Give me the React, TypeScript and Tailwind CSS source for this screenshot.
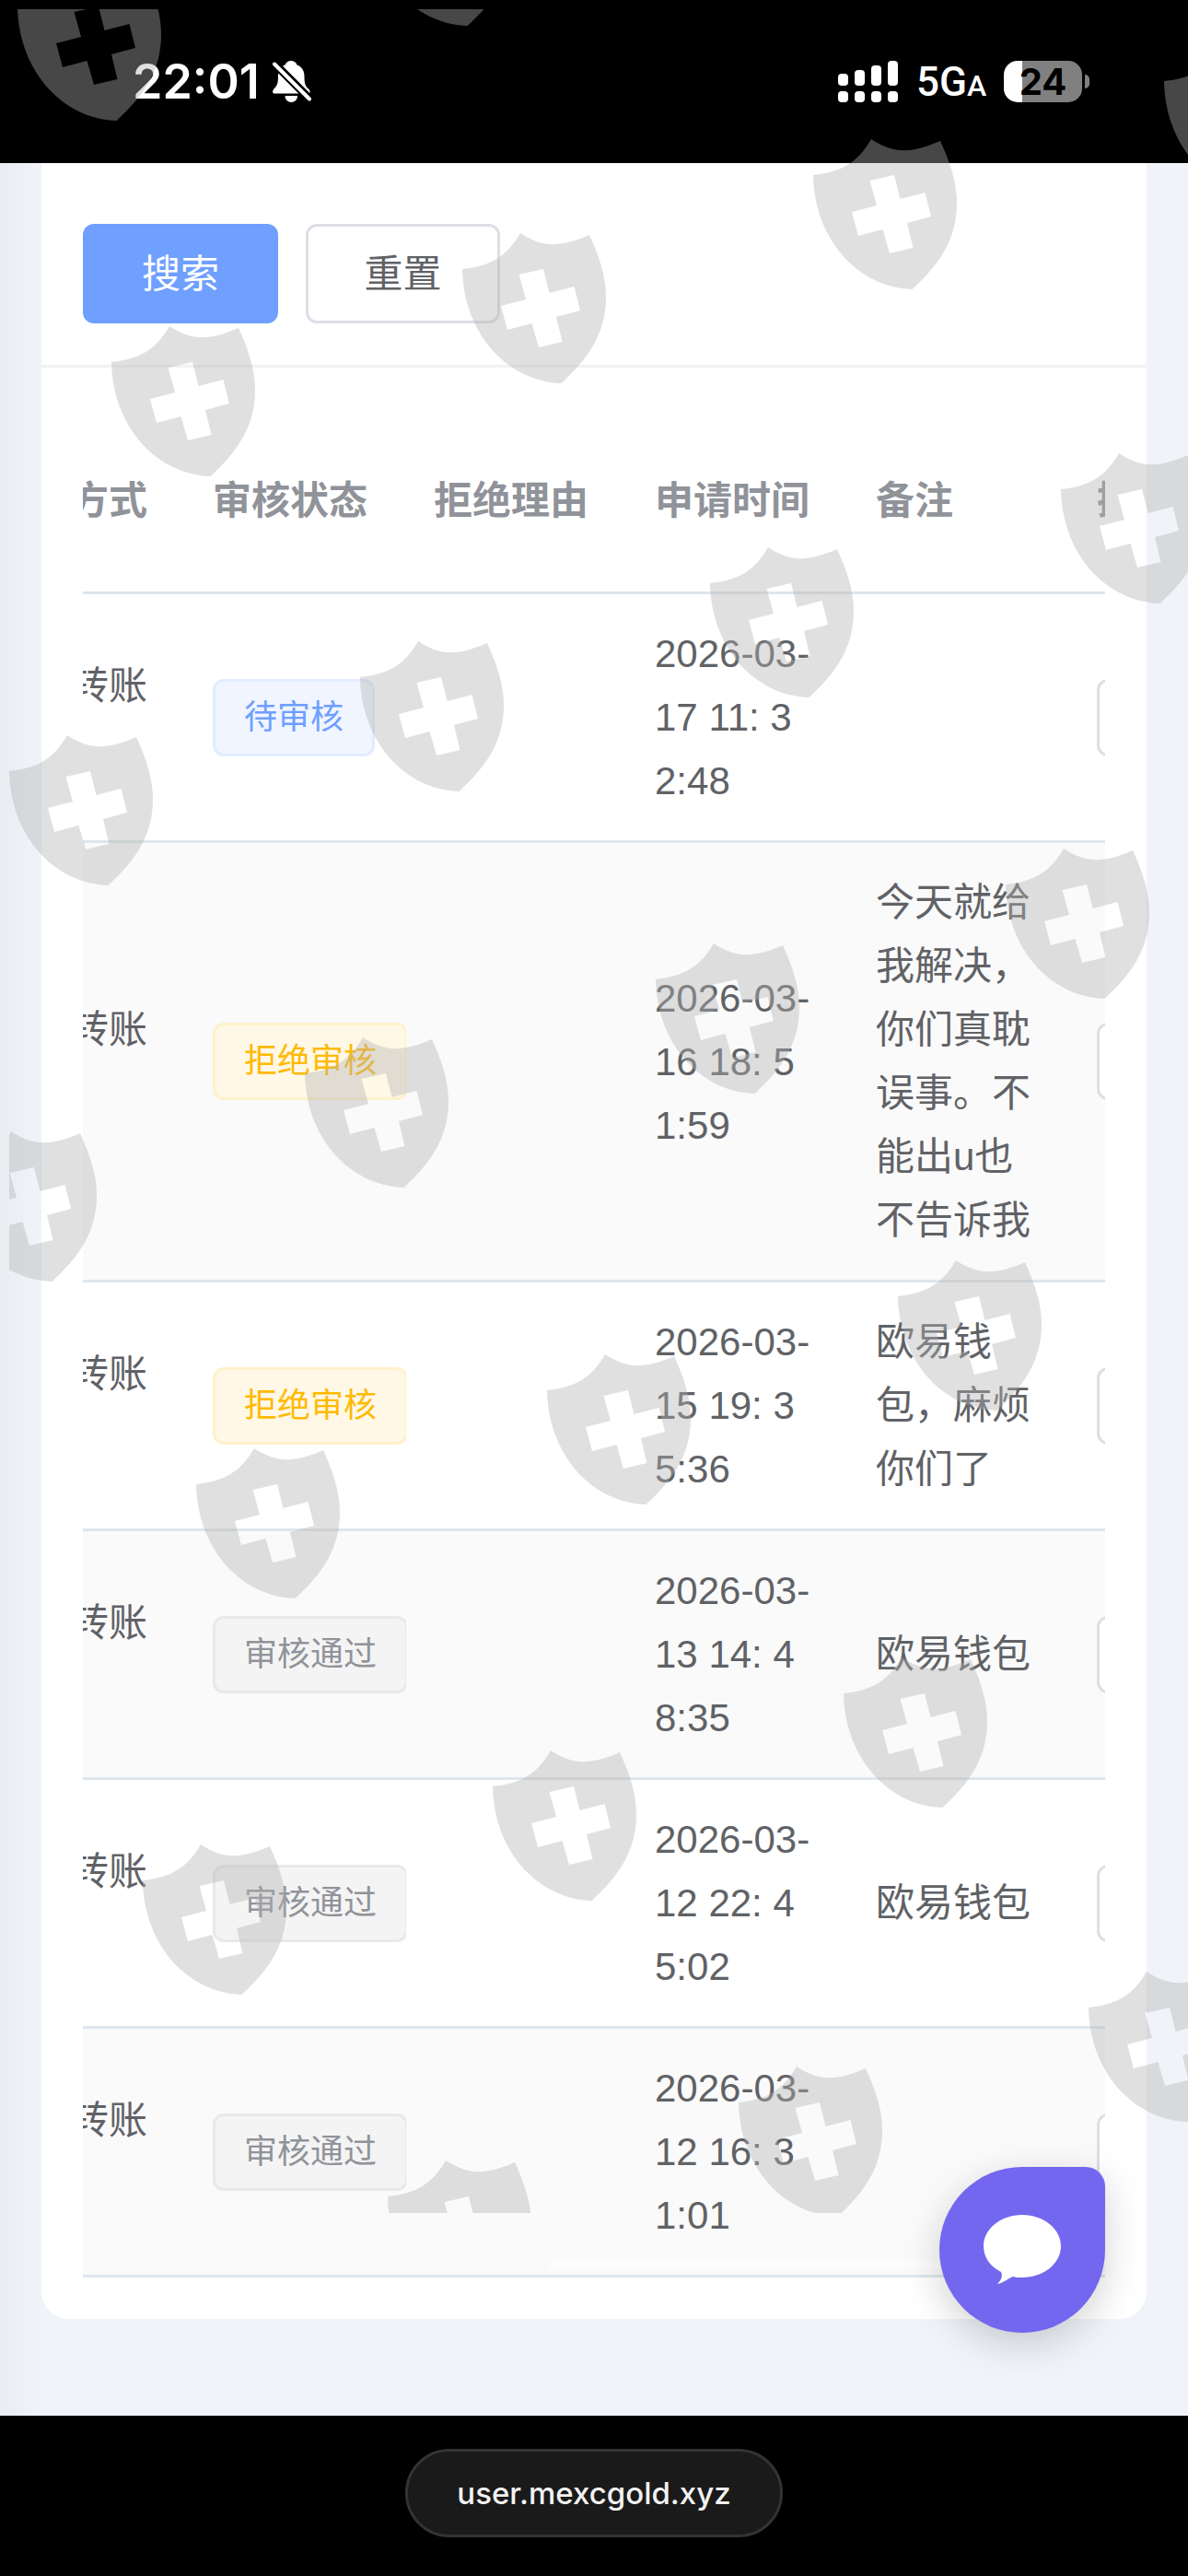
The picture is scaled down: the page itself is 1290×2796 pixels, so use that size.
type Status = "pending" | "rejected" | "passed";

interface RecordRow {
  status: Status;
  time: string[];
  remark: string[];
}

const columns = ["审核状态", "拒绝理由", "申请时间", "备注"];

const rows: RecordRow[] = [
  { status: "pending", time: ["2026-03-", "17 11: 3", "2:48"], remark: [] },
  {
    status: "rejected",
    time: ["2026-03-", "16 18: 5", "1:59"],
    remark: ["今天就给", "我解决，", "你们真耽", "误事。不", "能出u也", "不告诉我"],
  },
  { status: "rejected", time: ["2026-03-", "15 19: 3", "5:36"], remark: ["欧易钱", "包，麻烦", "你们了"] },
  { status: "passed", time: ["2026-03-", "13 14: 4", "8:35"], remark: ["欧易钱包"] },
  { status: "passed", time: ["2026-03-", "12 22: 4", "5:02"], remark: ["欧易钱包"] },
  { status: "passed", time: ["2026-03-", "12 16: 3", "1:01"], remark: [] },
];

const statusStyle: Record<Status, { label: string; className: string }> = {
  pending: { label: "待审核", className: "border-[#e2ecff] bg-[#f0f5ff] text-[#6f9fff]" },
  rejected: { label: "拒绝审核", className: "border-[#fff1cc] bg-[#fff8e6] text-[#ffba00]" },
  passed: { label: "审核通过", className: "border-[#e9e9e9] bg-[#f4f4f4] text-[#909399]" },
};

// Offsets of each shield inside the watermark layer.
const shields: [number, number][] = [
  [9, -42],
  [390, -145],
  [1254, 39],
  [873, 141],
  [492, 243],
  [111, 344],
  [1142, 482],
  [761, 584],
  [381, 686],
  [0, 788],
  [1082, 911],
  [702, 1014],
  [321, 1116],
  [-61, 1218],
  [965, 1358],
  [584, 1460],
  [203, 1562],
  [906, 1789],
  [525, 1890],
  [145, 1992],
  [1172, 2130],
  [792, 2233],
  [411, 2335],
];

function Watermark() {
  return (
    <svg
      className="pointer-events-none absolute left-[10px] top-[10px] h-[2392px] w-[calc(100%-10px)] overflow-hidden"
      aria-hidden="true"
    >
      <defs>
        <path
          id="shield"
          fillRule="evenodd"
          d="M0 39C30 36 48 26 63 0C88 16 105 16 138 2C148 24 156 46 156 69C156 108 138 135 107.500 163C48 161 1 108 0 39ZM61.500 45L69 72L42 79L49 105L75.500 98L83 124L108.500 118L102 91L128 84L121.500 58L94.500 65L88 39Z"
        />
      </defs>
      <g fill="#b2b2b2" fillOpacity="0.4">
        {shields.map(([x, y]) => (
          <use key={`${x},${y}`} href="#shield" x={x} y={y} />
        ))}
      </g>
    </svg>
  );
}

function BellOff() {
  return (
    <svg className="h-[45px] w-[42px]" viewBox="0 0 42 45" fill="none" aria-hidden="true">
      <path
        d="M20 0C23 0 25.500 1.500 26.500 4.500C32 6.500 34.500 11 34.500 17C34.500 25 35.500 27.500 39.500 31C40.500 32 41 34 40 35.500H2C-0.300 35.500-0.300 32.500 1 31C5 27 6 24.500 6 17C6 11 8.500 6.500 13.500 4.500C14.500 1.500 17 0 20 0Z"
        fill="white"
      />
      <path d="M13.500 38H27C27 42 24 45 20.300 45C16.500 45 13.500 42 13.500 38Z" fill="white" />
      <path d="M2 3L41 42" stroke="black" strokeWidth="9" />
      <path d="M2 3.500L40 41.500" stroke="white" strokeWidth="4" strokeLinecap="round" />
    </svg>
  );
}

function Signal() {
  return (
    <svg className="h-[45px] w-[65px]" viewBox="0 0 65 45" fill="white" aria-hidden="true">
      {[14, 10, 5, 0].map((top, i) => (
        <g key={top}>
          <rect x={i * 18} y={top} width="11" height={27 - top} rx="4" />
          <rect x={i * 18} y="33" width="11" height="12" rx="4" />
        </g>
      ))}
    </svg>
  );
}

function StatusBar() {
  return (
    <header className="flex h-[177px] items-center justify-between bg-black pl-[144px] pr-[107px] font-['Inter',sans-serif] text-white">
      <div className="flex items-center gap-[14px]">
        <span className="text-[52px] font-semibold leading-none">22:01</span>
        <BellOff />
      </div>
      <div className="flex items-center">
        <Signal />
        <span className="ml-5 w-[95px] whitespace-nowrap font-['Roboto',sans-serif] text-[44px] font-medium leading-none">
          5G<span className="text-[32px]">A</span>
        </span>
        <span className="flex h-[45px] w-[85px] items-center justify-center rounded-[15px] bg-[linear-gradient(to_right,#fff_20px,#808080_20px)] text-[40px] font-bold leading-none text-black">
          24
        </span>
        <span className="ml-[3px] h-[15px] w-[5px] rounded-r-full bg-[#808080]" />
      </div>
    </header>
  );
}

function Lines({ lines }: { lines: string[] }) {
  return (
    <>
      {lines.map((line) => (
        <div key={line} className="whitespace-nowrap">
          {line}
        </div>
      ))}
    </>
  );
}

const cell = "overflow-hidden border-b-[3px] border-[#dfe6ec] py-[30px] pl-[30px] text-left";

function RecordTable() {
  return (
    <table className="w-full table-fixed border-separate border-spacing-0 text-[42px] leading-[69px] text-[#606266]">
      <colgroup>
        <col className="w-[10%]" />
        <col className="w-[240px]" />
        <col className="w-[240px]" />
        <col className="w-[240px]" />
        <col className="w-[240px]" />
        <col className="w-[39px]" />
      </colgroup>
      <thead>
        <tr className="h-[201px] text-[#909399]">
          <th className="overflow-hidden border-b-[3px] border-[#dfe6ec] pr-[41px] font-bold">
            <div className="flex justify-end whitespace-nowrap">方式</div>
          </th>
          {columns.map((name) => (
            <th key={name} className={`${cell} whitespace-nowrap font-bold`}>
              {name}
            </th>
          ))}
          <th className={`${cell} whitespace-nowrap font-bold`}>操作</th>
        </tr>
      </thead>
      <tbody>
        {rows.map((row) => {
          const tag = statusStyle[row.status];
          return (
            <tr key={row.time.join("")} className="even:bg-[#fafafa]">
              <td className="overflow-hidden border-b-[3px] border-[#dfe6ec] pr-[41px]">
                <div className="flex h-[138px] justify-end whitespace-nowrap">转账</div>
              </td>
              <td className={cell}>
                <span
                  className={`flex h-[84px] w-max items-center rounded-xl border-[3px] px-[31px] text-[36px] leading-none ${tag.className}`}
                >
                  {tag.label}
                </span>
              </td>
              <td className={cell} />
              <td className={cell}>
                <Lines lines={row.time} />
              </td>
              <td className={cell}>
                <Lines lines={row.remark} />
              </td>
              <td className={cell}>
                <button
                  type="button"
                  aria-label="操作"
                  className="block h-[84px] w-[150px] rounded-xl border-[3px] border-[#dcdfe6] bg-white"
                />
              </td>
            </tr>
          );
        })}
      </tbody>
    </table>
  );
}

export default function App() {
  return (
    <div className="relative min-h-screen overflow-hidden bg-black font-['Liberation_Sans','Noto_Sans_CJK_SC',sans-serif]">
      <StatusBar />
      <main className="relative bg-[#f0f4f9] bg-[linear-gradient(to_right,#e9edf2,#f0f4f9_42px)] px-[45px] pb-[105px]">
        <section className="rounded-b-[30px] bg-white">
          <div className="flex gap-[30px] border-b-[3px] border-[#f2f2f2] px-[45px] pb-[45px] pt-[66px] text-[42px] leading-none">
            <button type="button" className="h-[108px] w-[212px] rounded-xl bg-[#6f9fff] pt-[2px] text-white">
              搜索
            </button>
            <button
              type="button"
              className="h-[108px] w-[211px] rounded-xl border-[3px] border-[#dcdfe6] bg-white pt-[2px] text-[#606266]"
            >
              重置
            </button>
          </div>
          <div className="p-[45px]">
            <div className="relative overflow-hidden">
              <RecordTable />
              <span className="absolute bottom-[10px] left-[505px] right-0 h-[9px] rounded-full bg-white/50" />
            </div>
          </div>
        </section>
        <button
          type="button"
          aria-label="在线客服"
          className="absolute bottom-[90px] right-[90px] flex size-[180px] items-center justify-center rounded-[90px] rounded-tr-[21px] bg-[#7367f0] shadow-[0_12px_42px_rgba(0,0,0,0.18)]"
        >
          <svg className="h-[76px] w-[84px]" viewBox="0 0 84 76" fill="white" aria-hidden="true">
            <path d="M42 0C65 0 84 15 84 34C84 53 65 68 42 68C38 68 35 68 32 67C26 69 22 74 15 75C19 71 21 67 19 62C7 56 0 46 0 34C0 15 19 0 42 0Z" />
          </svg>
        </button>
      </main>
      <footer className="flex justify-center bg-black pb-[42px] pt-9">
        <div className="flex h-24 items-center rounded-full border-[3px] border-[#333] bg-[#1a1a1a] px-[53px] font-['Inter',sans-serif] text-[33px] font-medium leading-none text-[#f2f2f2]">
          user.mexcgold.xyz
        </div>
      </footer>
      <Watermark />
    </div>
  );
}
